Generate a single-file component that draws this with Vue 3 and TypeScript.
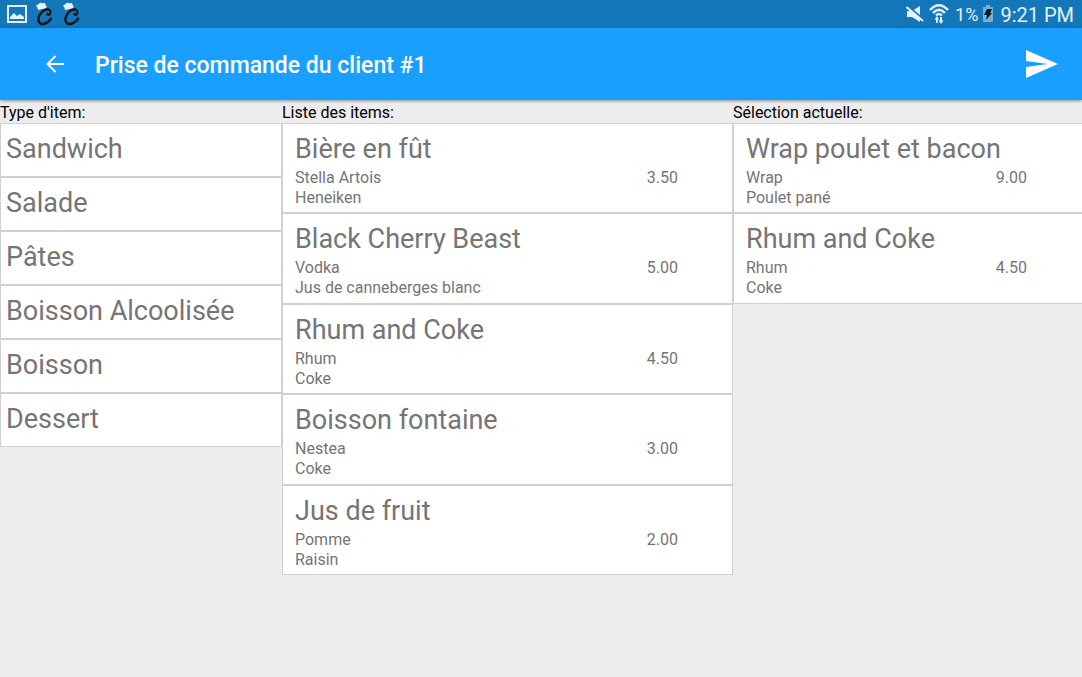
<script setup lang="ts">
interface Item {
  name: string
  details: string[]
  price: string
}

const title = 'Prise de commande du client #1'

const types: string[] = ['Sandwich', 'Salade', 'Pâtes', 'Boisson Alcoolisée', 'Boisson', 'Dessert']

const items: Item[] = [
  { name: 'Bière en fût', details: ['Stella Artois', 'Heneiken'], price: '3.50' },
  { name: 'Black Cherry Beast', details: ['Vodka', 'Jus de canneberges blanc'], price: '5.00' },
  { name: 'Rhum and Coke', details: ['Rhum', 'Coke'], price: '4.50' },
  { name: 'Boisson fontaine', details: ['Nestea', 'Coke'], price: '3.00' },
  { name: 'Jus de fruit', details: ['Pomme', 'Raisin'], price: '2.00' },
]

const selection: Item[] = [
  { name: 'Wrap poulet et bacon', details: ['Wrap', 'Poulet pané'], price: '9.00' },
  { name: 'Rhum and Coke', details: ['Rhum', 'Coke'], price: '4.50' },
]

const lists = [
  { id: 'items', label: 'Liste des items:', rows: items },
  { id: 'selection', label: 'Sélection actuelle:', rows: selection },
]
</script>

<template>
  <div class="screen">
    <div class="status">
      <div class="notifications">
        <svg viewBox="0 0 20 18" width="20" height="18" aria-hidden="true">
          <rect x="1" y="1" width="18" height="16" fill="none" stroke="#e4f1fa" stroke-width="2" />
          <path d="M3 14V12L7 8L10 11L13 9L17 12V14Z" fill="#e4f1fa" />
        </svg>
        <svg v-for="n in 2" :key="n" viewBox="0 0 18 24" width="18" height="24" aria-hidden="true">
          <path d="M12 7.500C7.500 7 3 12 2.500 16.500C2 21.500 5.500 23 9 21.500C11.500 20.500 14 18.500 15 16.500" fill="none" stroke="#111820" stroke-width="2.500" stroke-linecap="round" />
          <path d="M12 7.500C15.500 8 15 12.500 12.500 13C11.500 13.200 11 12.500 11.500 11.500" fill="none" stroke="#111820" stroke-width="2" stroke-linecap="round" />
          <path d="M2 8L1.500 5.500C-0.500 4.500 0 2.500 2.500 2.500C3 0.500 5.500 0 6.500 1.500C8 0.500 10 1.500 9.500 3L11 5L8.500 6.500Z" fill="#f0f3f5" />
        </svg>
      </div>
      <div class="system">
        <svg viewBox="0 0 18 18" width="18" height="18" aria-hidden="true">
          <path d="M1 6H6L14 1V17L6 12H1Z" fill="#e4f1fa" />
          <path d="M1 0.500L18 14.500" stroke="#1477ba" stroke-width="2" />
          <path d="M0.500 2L17 16" stroke="#e4f1fa" stroke-width="2" />
        </svg>
        <svg class="wifi" viewBox="0 0 20 22" width="20" height="22" aria-hidden="true">
          <g fill="none" stroke="#e4f1fa" stroke-width="2.400">
            <path d="M1 7Q10 -2.500 19 7" />
            <path d="M4 10Q10 3.500 16 10" />
            <path d="M7 12.500Q10 9.500 13 12.500" />
          </g>
          <path d="M8 13L10 16.500H8.800V20H7V16.500H5.500ZM12 21L9.500 17.500H11V14H13V17.500H14.500Z" fill="#e4f1fa" />
        </svg>
        <span class="level">1%</span>
        <svg class="battery" viewBox="0 0 12 18" width="12" height="18" aria-hidden="true">
          <path d="M1 2H4V0H8V2H11V17H1Z" fill="#74afd6" />
          <path d="M5 4H10L8 8H10L4 15L5 10H2Z" fill="#10171d" />
        </svg>
        <span class="time">9:21 PM</span>
      </div>
    </div>

    <header class="bar">
      <button type="button" aria-label="Retour">
        <svg viewBox="0 0 18 18" width="18" height="18" aria-hidden="true">
          <path d="M18 9H2M9.500 1L1.500 9L9.500 17" fill="none" stroke="#fff" stroke-width="2" />
        </svg>
      </button>
      <h1>{{ title }}</h1>
      <button type="button" aria-label="Envoyer">
        <svg viewBox="0 0 32 28" width="32" height="28" aria-hidden="true">
          <path d="M0 0L32 14L0 28V17L22 14L0 11Z" fill="#fff" />
        </svg>
      </button>
    </header>

    <main class="columns">
      <section aria-labelledby="types-label">
        <h2 id="types-label">Type d'item:</h2>
        <ul>
          <li v-for="type in types" :key="type">
            <button class="type" type="button">{{ type }}</button>
          </li>
        </ul>
      </section>

      <section v-for="list in lists" :key="list.id" :aria-labelledby="`${list.id}-label`">
        <h2 :id="`${list.id}-label`">{{ list.label }}</h2>
        <ul>
          <li v-for="row in list.rows" :key="row.name" class="entry">
            <button class="item" type="button">
              <span class="name">{{ row.name }}</span>
              <span class="line">
                <span class="details">
                  <span v-for="detail in row.details" :key="detail">{{ detail }}</span>
                </span>
                <span class="price">{{ row.price }}</span>
              </span>
            </button>
          </li>
        </ul>
      </section>
    </main>
  </div>
</template>

<style>
body {
  margin: 0;
  background: #ededed;
}
</style>

<style scoped>
.screen {
  min-height: 100vh;
  background: #ededed;
  color: #757575;
  font-family: Roboto, "Noto Sans", sans-serif;
}

button {
  margin: 0;
  padding: 0;
  border: 0;
  background: none;
  color: inherit;
  font: inherit;
  text-align: left;
  cursor: pointer;
}

svg {
  display: block;
  flex: none;
}

.status {
  display: flex;
  align-items: center;
  justify-content: space-between;
  height: 28px;
  padding: 0 8px 0 7px;
  background: #1477ba;
  color: #e4f1fa;
}

.notifications,
.system {
  display: flex;
  align-items: center;
}

.notifications {
  gap: 9px;
}

.wifi {
  margin-left: 5px;
}

.level {
  margin-left: 6px;
  font-size: 18px;
  line-height: 28px;
  padding-top: 2px;
}

.battery {
  margin: 0 6px 0 4px;
}

.time {
  font-size: 20px;
  line-height: 28px;
  padding-top: 2px;
}

.bar {
  position: relative;
  display: flex;
  align-items: center;
  height: 72px;
  padding: 0 24px 0 46px;
  background: #189fff;
  color: #fff;
  box-shadow: 0 1px 3px rgba(0, 0, 0, 0.4);
}

h1 {
  flex: 1;
  margin: 0 0 0 31px;
  padding-top: 3px;
  font-size: 23px;
  font-weight: 500;
  line-height: 28px;
}

.columns {
  display: grid;
  grid-template-columns: 282fr 451fr 349fr;
  align-items: start;
}

h2 {
  margin: 0;
  padding-top: 2px;
  color: #000;
  font-size: 16px;
  font-weight: 400;
  line-height: 21px;
}

ul {
  margin: 0;
  padding: 0;
  list-style: none;
}

.type,
.item {
  display: block;
  box-sizing: border-box;
  width: 100%;
  border: 1px solid #d0d0d0;
  background: #fff;
}

.type {
  height: 54px;
  padding: 0 5px 2px;
  font-size: 27px;
  line-height: 48px;
}

.item {
  height: 90px;
  padding: 3px 54px 2px 12px;
}

.entry:nth-child(even) .item {
  height: 91px;
}

section:last-child .item {
  padding-right: 55px;
  border-right: 0;
}

.name {
  display: block;
  font-size: 27px;
  line-height: 38px;
}

.line {
  display: flex;
  justify-content: space-between;
  font-size: 16px;
  line-height: 20px;
}

.details > span {
  display: block;
}
</style>
